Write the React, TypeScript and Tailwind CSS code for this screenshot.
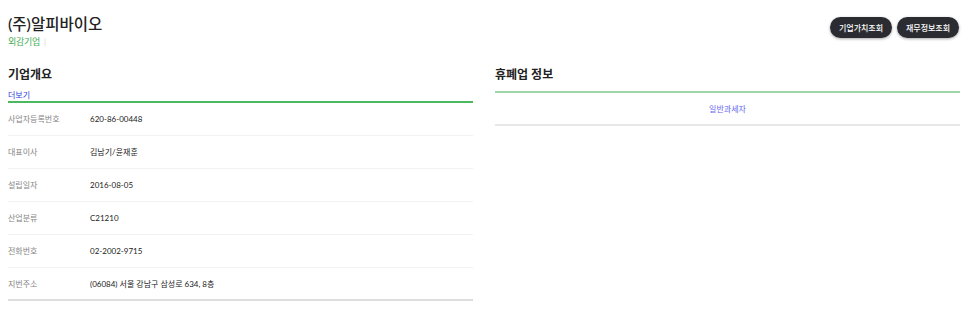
import React from "react";

const rows: [string, string][] = [
  ["사업자등록번호", "620-86-00448"],
  ["대표이사", "김남기/윤재훈"],
  ["설립일자", "2016-08-05"],
  ["산업분류", "C21210"],
  ["전화번호", "02-2002-9715"],
  ["지번주소", "(06084) 서울 강남구 삼성로 634, 8층"],
];

function Mixed({ text, k }: { text: string; k: string }) {
  const parts = text.split(/([\uAC00-\uD7A3]+)/);
  return (
    <>
      {parts.map((p, i) =>
        /[\uAC00-\uD7A3]/.test(p) ? (
          <span key={i} className={k}>
            {p}
          </span>
        ) : (
          <span key={i}>{p}</span>
        )
      )}
    </>
  );
}

export default function App() {
  return (
    <div
      className="w-[966px] h-[317px] bg-white overflow-hidden pl-[8px] pr-[6px]"
      style={{ fontFamily: '"Lato", "Noto Sans CJK KR", sans-serif' }}
    >
      <div className="flex justify-between items-start pt-[12px]">
        <div>
          <div className="text-[16px] leading-[24px] font-medium text-[#222]">
            <Mixed text="(주)알피바이오" k="text-[15.5px]" />
          </div>
          <div className="flex items-center text-[9px] leading-[12px]">
            <span className="text-[#3fae52] tracking-[-0.3px]">외감기업</span>
            <span className="ml-[4px] text-[#d0d0d0] text-[8px]">|</span>
          </div>
        </div>
        <div className="flex gap-[5px] mt-[5px] mr-[1px]">
          <button className="h-[21px] w-[62px] rounded-full bg-[#2b2c31] text-white text-[8px] font-medium shadow-[0_1px_3px_rgba(0,0,0,0.35)]">
            기업가치조회
          </button>
          <button className="h-[21px] w-[62px] rounded-full bg-[#2b2c31] text-white text-[8px] font-medium shadow-[0_1px_3px_rgba(0,0,0,0.35)]">
            재무정보조회
          </button>
        </div>
      </div>

      <div className="grid grid-cols-2 gap-[22px] mt-[17px]">
        <div>
          <div className="text-[12px] leading-[20px] font-semibold text-[#222]">기업개요</div>
          <div className="mt-[4px] text-[8px] leading-[12px] text-[#2b3bd9] border-b-2 border-[#4cb862]">
            더보기
          </div>
          <div className="border-b-2 border-[#dddddd]">
            {rows.map(([k, v], i) => (
              <div
                key={k}
                className={`flex items-center text-[8px] ${i < rows.length - 1 ? "h-[33px] border-b border-[#f2f2f2]" : "h-[31px]"}`}
              >
                <span className="w-[82px] text-[#858585]">{k}</span>
                <span className="text-[#222]">{v}</span>
              </div>
            ))}
          </div>
        </div>
        <div>
          <div className="text-[12px] leading-[20px] font-semibold text-[#222]">휴폐업 정보</div>
          <div className="mt-[6px] border-t-2 border-[#9fd5a8] border-b-2 border-b-[#e8e8e8] h-[35px] flex items-center justify-center text-[8px] text-[#6363f0]">
            일반과세자
          </div>
        </div>
      </div>
    </div>
  );
}
